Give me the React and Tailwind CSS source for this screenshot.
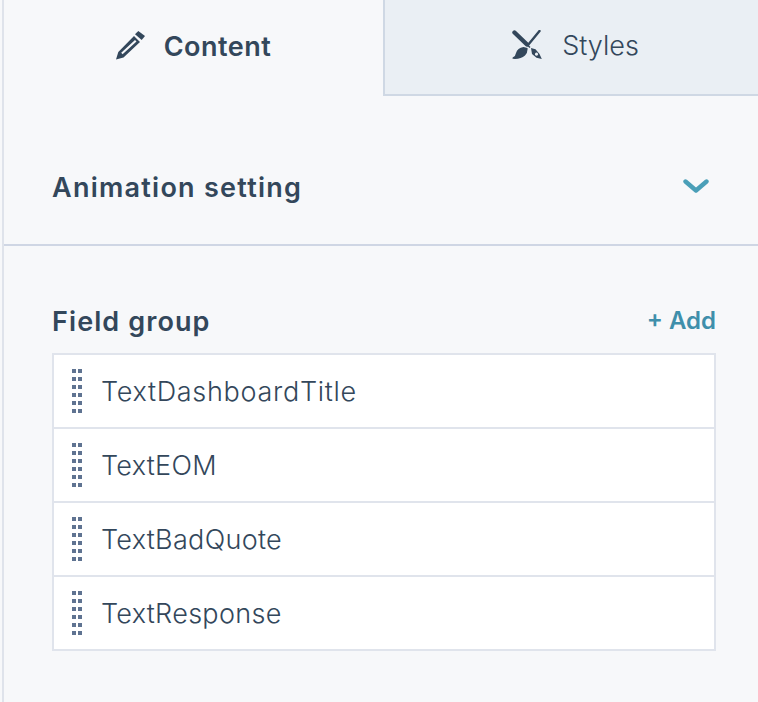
const font = { fontFamily: '"Inter", sans-serif' };

function Grip() {
  return (
    <div className="grid grid-cols-2 gap-x-[2px] gap-y-[4px] w-[10px] shrink-0">
      {Array.from({ length: 12 }).map((_, i) => (
        <span key={i} className="block w-[4px] h-[4px] bg-[#5f7391]" />
      ))}
    </div>
  );
}

function Row({ label, last, wide }) {
  return (
    <div className={`flex items-center pl-[18px] bg-white ${last ? "h-[72px]" : "h-[74px] border-b-2 border-[#e0e4ec]"}`}>
      <Grip />
      <span className={`ml-[19px] text-[27px] font-light text-[#33475b] leading-none ${wide ? "tracking-[0.7px]" : "tracking-[0.3px]"}`}>{label}</span>
    </div>
  );
}

function Pencil() {
  return (
    <svg width="30" height="30" viewBox="0 0 30 30" className="shrink-0">
      <path fill="#33475b" fillRule="evenodd" d="M0 28.5 L2.3 21 L18 5 L24 11 L7.5 26.5 Z M5.2 21.8 L6.6 23.2 L20.5 10.6 L19 9 Z" />
      <path fill="#33475b" d="M22.3 0 L29 5 L25.7 9 L19 3.3 Z" />
    </svg>
  );
}

function Brushes() {
  return (
    <svg width="30" height="30" viewBox="0 0 30 30" className="shrink-0">
      <path d="M2.5 2.5 L15 14.5" stroke="#33475b" strokeWidth="4.4" strokeLinecap="round" fill="none" />
      <path d="M15 14.5 L18 17.5" stroke="#33475b" strokeWidth="1.5" fill="none" />
      <path d="M27.5 1 L15.8 15.2" stroke="#33475b" strokeWidth="2.4" strokeLinecap="round" fill="none" />
      <path fill="#33475b" d="M11.5 17 L15.5 18 Q16 22 13 25.5 Q8.5 29.4 1 28.8 Q-0.2 28.4 1 27.2 Q3.6 26 4 23 Q5.4 18 11.5 17 Z" />
      <path fill="#33475b" fillRule="evenodd" d="M19 18 L23.5 19.2 L27.5 24 L29.8 29 L24.5 27.8 L20 24 Z M24.5 22.6 a1.6 1.6 0 1 0 0.01 0 Z" />
    </svg>
  );
}

function Chevron() {
  return (
    <svg width="26" height="15" viewBox="0 0 26 15" className="-mt-[2px]">
      <path d="M2.5 2.5 L13 11.5 L23.5 2.5" fill="none" stroke="#4a9fb8" strokeWidth="4.4" strokeLinecap="round" strokeLinejoin="round" />
    </svg>
  );
}

export default function App() {
  return (
    <div style={font} className="w-[758px] h-[702px] overflow-hidden bg-[#f7f8fa] pl-[2px]">
      <div className="h-full border-l-2 border-[#dfe3eb] flex flex-col">
        <div className="flex h-[96px] shrink-0">
          <div className="w-[379px] flex items-center justify-center gap-[18px] pb-[4px]">
            <Pencil />
            <span className="text-[27px] font-semibold tracking-[0.5px] text-[#33475b] leading-none">Content</span>
          </div>
          <div className="flex-1 flex items-center justify-center gap-[20px] pb-[4px] pl-[8px] bg-[#eaeff4] border-l-2 border-b-2 border-[#cfd8e4]">
            <Brushes />
            <span className="text-[27px] font-light text-[#33475b] leading-none">Styles</span>
          </div>
        </div>
        <div className="h-[150px] shrink-0 flex items-center justify-between pl-[48px] pr-[49px] pt-[34px] border-b-2 border-[#cfd6e4]">
          <span className="text-[27px] font-semibold tracking-[1.25px] text-[#33475b] leading-none">Animation setting</span>
          <Chevron />
        </div>
        <div className="pl-[48px] pr-[42px] pt-[59px]">
          <div className="flex items-center justify-between h-[32px] mb-[16px]">
            <span className="text-[27px] font-semibold tracking-[1.1px] text-[#33475b] leading-none">Field group</span>
            <span className="text-[24px] font-semibold text-[#3f8fab] leading-none">+ Add</span>
          </div>
          <div className="border-2 border-[#e0e4ec] flex flex-col">
            <Row label="TextDashboardTitle" wide />
            <Row label="TextEOM" />
            <Row label="TextBadQuote" />
            <Row label="TextResponse" last />
          </div>
        </div>
      </div>
    </div>
  );
}
